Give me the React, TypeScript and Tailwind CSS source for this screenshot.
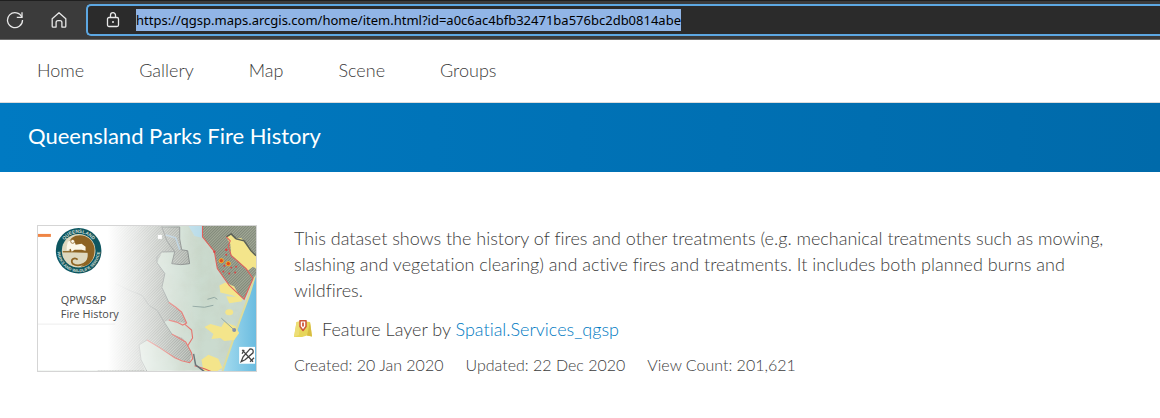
import React, { useEffect, useRef } from "react";

const navItems = ["Home", "Gallery", "Map", "Scene", "Groups"];

const itemUrl =
  "https://qgsp.maps.arcgis.com/home/item.html?id=a0c6ac4bfb32471ba576bc2db0814abe";

const BrowserBar = () => {
  const addressRef = useRef<HTMLInputElement>(null);

  useEffect(() => {
    addressRef.current?.focus();
    addressRef.current?.select();
  }, []);

  return (
    <div className="flex items-center h-10 pl-[6px] bg-[#3b3b3b] border-t border-t-[#1f1f1f] border-b border-b-[#6b6b6b]">
      <button type="button" aria-label="Refresh" className="mr-[26px] text-[#e8e8e8]">
        <svg width="18" height="18" viewBox="0 0 18 18" fill="none" stroke="currentColor" strokeWidth="1.3">
          <path d="M15.9 6.2A7.5 7.5 0 1 0 16.5 9" />
          <path d="M16 1.2V6.4H10.8" />
        </svg>
      </button>
      <button type="button" aria-label="Home page" className="mr-[18px] text-[#e8e8e8]">
        <svg width="18" height="18" viewBox="0 0 18 18" fill="none" stroke="currentColor" strokeWidth="1.3" strokeLinejoin="round">
          <path d="M2.2 7.8 9 1.8l6.8 6v7.4a.9.9 0 0 1-.9.9h-3v-4.6A1.9 1.9 0 0 0 10 9.6H8a1.9 1.9 0 0 0-1.9 1.9v4.6h-3a.9.9 0 0 1-.9-.9z" />
        </svg>
      </button>
      <div className="flex flex-1 items-center h-8 pl-[17px] bg-[#2b2b2b] border-2 border-r-0 border-[#5da8e3] rounded-l-[5px]">
        <svg className="shrink-0 mr-[15px]" width="16" height="18" viewBox="0 0 16 18" fill="none" stroke="#e8e8e8" strokeWidth="1.3">
          <rect x="2.5" y="6.5" width="11" height="9" rx="1.5" />
          <path d="M5.5 6.5V4.2a2.5 2.5 0 0 1 5 0v2.3" />
          <circle cx="8" cy="11" r="1" fill="#e8e8e8" stroke="none" />
        </svg>
        <input
          ref={addressRef}
          type="text"
          aria-label="Address"
          defaultValue={itemUrl}
          spellCheck={false}
          className="flex-1 min-w-0 h-[22px] leading-[22px] font-['Noto_Sans','Open_Sans',sans-serif] font-normal text-[13px] text-white bg-transparent outline-none selection:bg-[#92b6e8fd] selection:text-black"
        />
      </div>
    </div>
  );
};

const Thumbnail = () => (
  <svg className="block w-full" viewBox="0 0 220 146" role="img" aria-label="Fire history map">
    <defs>
      <linearGradient id="fade" x1="0" x2="1" y1="0" y2="0">
        <stop offset="0.32" stopColor="#fff" />
        <stop offset="0.45" stopColor="#fff" stopOpacity="0.72" />
        <stop offset="0.6" stopColor="#fff" stopOpacity="0.35" />
        <stop offset="0.75" stopColor="#fff" stopOpacity="0" />
      </linearGradient>
      <linearGradient id="sea" x1="0" x2="1" y1="0" y2="0">
        <stop offset="0" stopColor="#a5dcef" />
        <stop offset="1" stopColor="#6bbce0" />
      </linearGradient>
      <pattern id="hatch" width="2" height="2" patternUnits="userSpaceOnUse" patternTransform="rotate(-45)">
        <rect width="2" height="2" fill="#bcc2ba" />
        <path d="M0 0H2" stroke="#6f736e" strokeWidth="1.2" />
      </pattern>
      <pattern id="hatchDark" width="2" height="2" patternUnits="userSpaceOnUse" patternTransform="rotate(-45)">
        <rect width="2" height="2" fill="#a3aa98" />
        <path d="M0 0H2" stroke="#5f665a" strokeWidth="1.2" />
      </pattern>
      <filter id="terrain" x="0" y="0" width="100%" height="100%">
        <feTurbulence type="fractalNoise" baseFrequency="0.06" numOctaves="3" seed="4" />
        <feColorMatrix values="0 0 0 0 0.55  0 0 0 0 0.62  0 0 0 0 0.52  1.6 0 0 0 -0.5" />
      </filter>
      <path id="sealTop" d="M23 25a18 18 0 0 1 36 0" />
      <path id="sealBottom" d="M20.1 20A21.5 21.5 0 1 0 61.9 20" />
    </defs>
    <rect width="220" height="146" fill="#cbdbcf" />
    <rect width="220" height="146" filter="url(#terrain)" opacity="0.6" />
    <path d="M152 0h14v12l-8-2z" fill="#b9dce9" />
    <path d="M220 48 213 70 203 97 186 147H220z" fill="url(#sea)" />
    <path d="M219 50 213 70 203 97 186 147" fill="none" stroke="#dedc9b" strokeWidth="2" />
    <path d="M60 0H126L130 15 138 26 125 27 120 37 128 48 125 62 132 77 145 87 150 98 140 97 132 95 127 97 135 109 146 113 155 128 153 138 138 133 123 123 110 115 102 120 104 135 108 147H60z" fill="url(#hatch)" />
    <path d="M125 1 130 15 138 26 135 38 144 39 153 38 151 25 145 24 143 13V1z" fill="url(#hatch)" stroke="#777c7a" />
    <path d="M138 26 125 26 120 31 120 37 128 48 125 62 132 77" fill="none" stroke="#858d8b" />
    <path d="M129 9 139 12 143 24" fill="none" stroke="#abc6d8" strokeWidth="1.5" />
    <path d="M78 58 90 64 105 70 112 80 120 85 128 98 135 109M110 115 102 120 104 135 110 147" fill="none" stroke="#858c89" />
    <path d="M166 0V11L178 26 181 43 193 60 208 74 217 53 220 49V0z" fill="url(#hatchDark)" />
    <path d="M190 11 194 8 199 13 205 12 210 18 216 25 220 30V43L217 41 212 45 203 36 195 29 194 18z" fill="#f4e58b" />
    <path d="M190 11 195 8 200 13 208 15 215 25 220 30" fill="none" stroke="#5b6156" strokeWidth="1.5" />
    <path d="M183 60 189 57 198 61 202 69 207 75 196 70 184 67zM190 71l14 1 2 4-13 2zM168 102l6-3 11 3 3-5 11 4 4 7-5 7-10 1-4-3-9 1 2-5zM165 135l7-5 10 4 4 9-6 4h-13z" fill="#f4e58b" />
    <ellipse cx="193" cy="87" rx="4" ry="3" fill="#f4e58b" />
    <g fill="none" stroke="#e1625b" strokeWidth="1.1">
      <path d="M166 0V11L178 26 181 43 193 60 208 74 217 53 210 43 195 30 192 20 194 15 190 11" />
      <path d="M132 77 139 82 145 87 150 98 146 100 140 97 132 95M148 99 155 105 156 113 151 121" />
      <path d="M110 115 123 123 138 133 145 136 153 138 156 134 155 128 149 117 135 109M158 141 168 144 175 147" />
    </g>
    <path d="M157 129 159 140 168 147" fill="none" stroke="#616d71" strokeWidth="1.5" />
    <path d="M156 81l12 1 9-2M171 74l7-2 3 2M185 93l12 11" fill="none" stroke="#91a7a2" />
    <circle cx="198" cy="105" r="2" fill="#8390aa" />
    <g fill="#db4343">
      <circle cx="190" cy="24" r="1.3" /><circle cx="190" cy="29" r="1" />
      <circle cx="188" cy="40" r="1" /><circle cx="195" cy="42" r="1" />
      <circle cx="200" cy="41" r="1" /><circle cx="187" cy="46" r="1" />
      <circle cx="193" cy="48" r="1" /><circle cx="199" cy="47" r="1" />
      <circle cx="178" cy="26" r="1.2" />
    </g>
    <g fill="#e24b20" stroke="#eeb02b">
      <circle cx="185" cy="35" r="2.2" /><circle cx="192" cy="38" r="2.2" />
    </g>
    <rect width="220" height="146" fill="url(#fade)" />
    <rect x="121" y="9" width="4" height="4" fill="#fff" />
    <rect x="0" y="8" width="13" height="3" fill="#ef8545" />
    <path d="M0 99H78" stroke="#ededed" />
    <circle cx="41" cy="25" r="23" fill="#0d5660" />
    <circle cx="41" cy="25" r="17" fill="#ded8bf" />
    <path d="M34 12C43 6 55 11 57 22 58 33 52 41 43 41 48 38 51 33 50 27L32 26 31 16z" fill="#8d6323" />
    <path d="M25 26H50" stroke="#8d6323" strokeWidth="1.3" />
    <path d="M52 27C53 38 41 42 35 38 32 34 37 31 40 34" fill="none" stroke="#8d6323" strokeWidth="1.8" />
    <path d="M29 21 30 16 34 14 37 16 38 19 44 18 48 21 48 25 44 24 37 24 34 26 33 23 29 25z" fill="#fbf7e9" />
    <circle cx="35" cy="15.5" r="2" fill="#fbf7e9" stroke="#8d6323" strokeWidth="0.8" />
    <g fill="#d5dfd5" fontFamily="Liberation Sans, sans-serif" fontSize="4.8" fontWeight="700" textAnchor="middle">
      <text><textPath href="#sealTop" startOffset="50%">QUEENSLAND</textPath></text>
      <text fontSize="4.2"><textPath href="#sealBottom" startOffset="50%">PARKS AND WILDLIFE SERVICE</textPath></text>
    </g>
    <g fill="#4b4b4b" fontFamily="Open Sans, Noto Sans, sans-serif" fontSize="11" fontWeight="400">
      <text x="23" y="79">QPWS&amp;P</text>
      <text x="23" y="93">Fire History</text>
    </g>
    <rect x="203" y="122" width="16" height="17" fill="#fff" />
    <g fill="none" stroke="#444" strokeWidth="1.3">
      <path d="M206 125 217 137M205 137 207 132 214 124Q218 124 217 128L209 135zM206 129 208 125M214 137 218 133" />
    </g>
  </svg>
);

const LayerIcon = () => (
  <svg className="shrink-0" width="18" height="18" viewBox="0 0 18 18" aria-hidden="true">
    <path d="M2.5 2 6 1.5l3 .5 3-.5 4 .5 2 14.5-5-1-5 1.5H0z" fill="#e7d65b" />
    <path d="M2.5 2 6 1.5 5 15 0 17z" fill="#edde76" />
    <path d="M16 2 18 16.5l-5-1z" fill="#d8bd42" />
    <path d="M6 .7h6V6.5L9 10.5 6 6.5z" fill="#fff" stroke="#cf5739" strokeWidth="1.5" strokeLinejoin="round" />
    <path d="M9 2.5v4" stroke="#cf5739" strokeWidth="1.8" />
  </svg>
);

const App = () => {
  return (
    <div className="bg-white text-[#3c3c3c] font-[Lato,sans-serif] font-light [font-variant-ligatures:none]">
      <BrowserBar />
      <nav className="flex items-center gap-[55px] h-[63px] px-[37px] pb-[2px] border-b border-[#dcdcdc] text-lg">
        {navItems.map((item) => (
          <a key={item} href="#">{item}</a>
        ))}
      </nav>
      <header className="flex items-center h-[69px] px-7 pb-1 bg-linear-to-r from-[#007ac2] to-[#006aaa]">
        <h1 className="text-[22px] leading-7 font-normal text-white">Queensland Parks Fire History</h1>
      </header>
      <main className="flex items-start gap-[37px] pl-[37px] pr-6 pt-[53px] pb-10">
        <div className="w-[220px] shrink-0 border border-[#d5d5d5]">
          <Thumbnail />
        </div>
        <div className="flex-1">
          <p className="text-lg leading-[26px]">
            This dataset shows the history of fires and other treatments (e.g. mechanical treatments such as mowing,
            slashing and vegetation clearing) and active fires and treatments. It includes both planned burns and
            wildfires.
          </p>
          <div className="flex items-center mt-[14px] text-lg leading-6">
            <LayerIcon />
            <span className="ml-[10px]">
              Feature Layer by <a href="#" className="text-[#007ac2]">Spatial.Services_qgsp</a>
            </span>
          </div>
          <div className="flex gap-[22px] mt-3 text-base leading-6">
            <span>Created: 20 Jan 2020</span>
            <span>Updated: 22 Dec 2020</span>
            <span>View Count: 201,621</span>
          </div>
        </div>
      </main>
    </div>
  );
};

export default App;
